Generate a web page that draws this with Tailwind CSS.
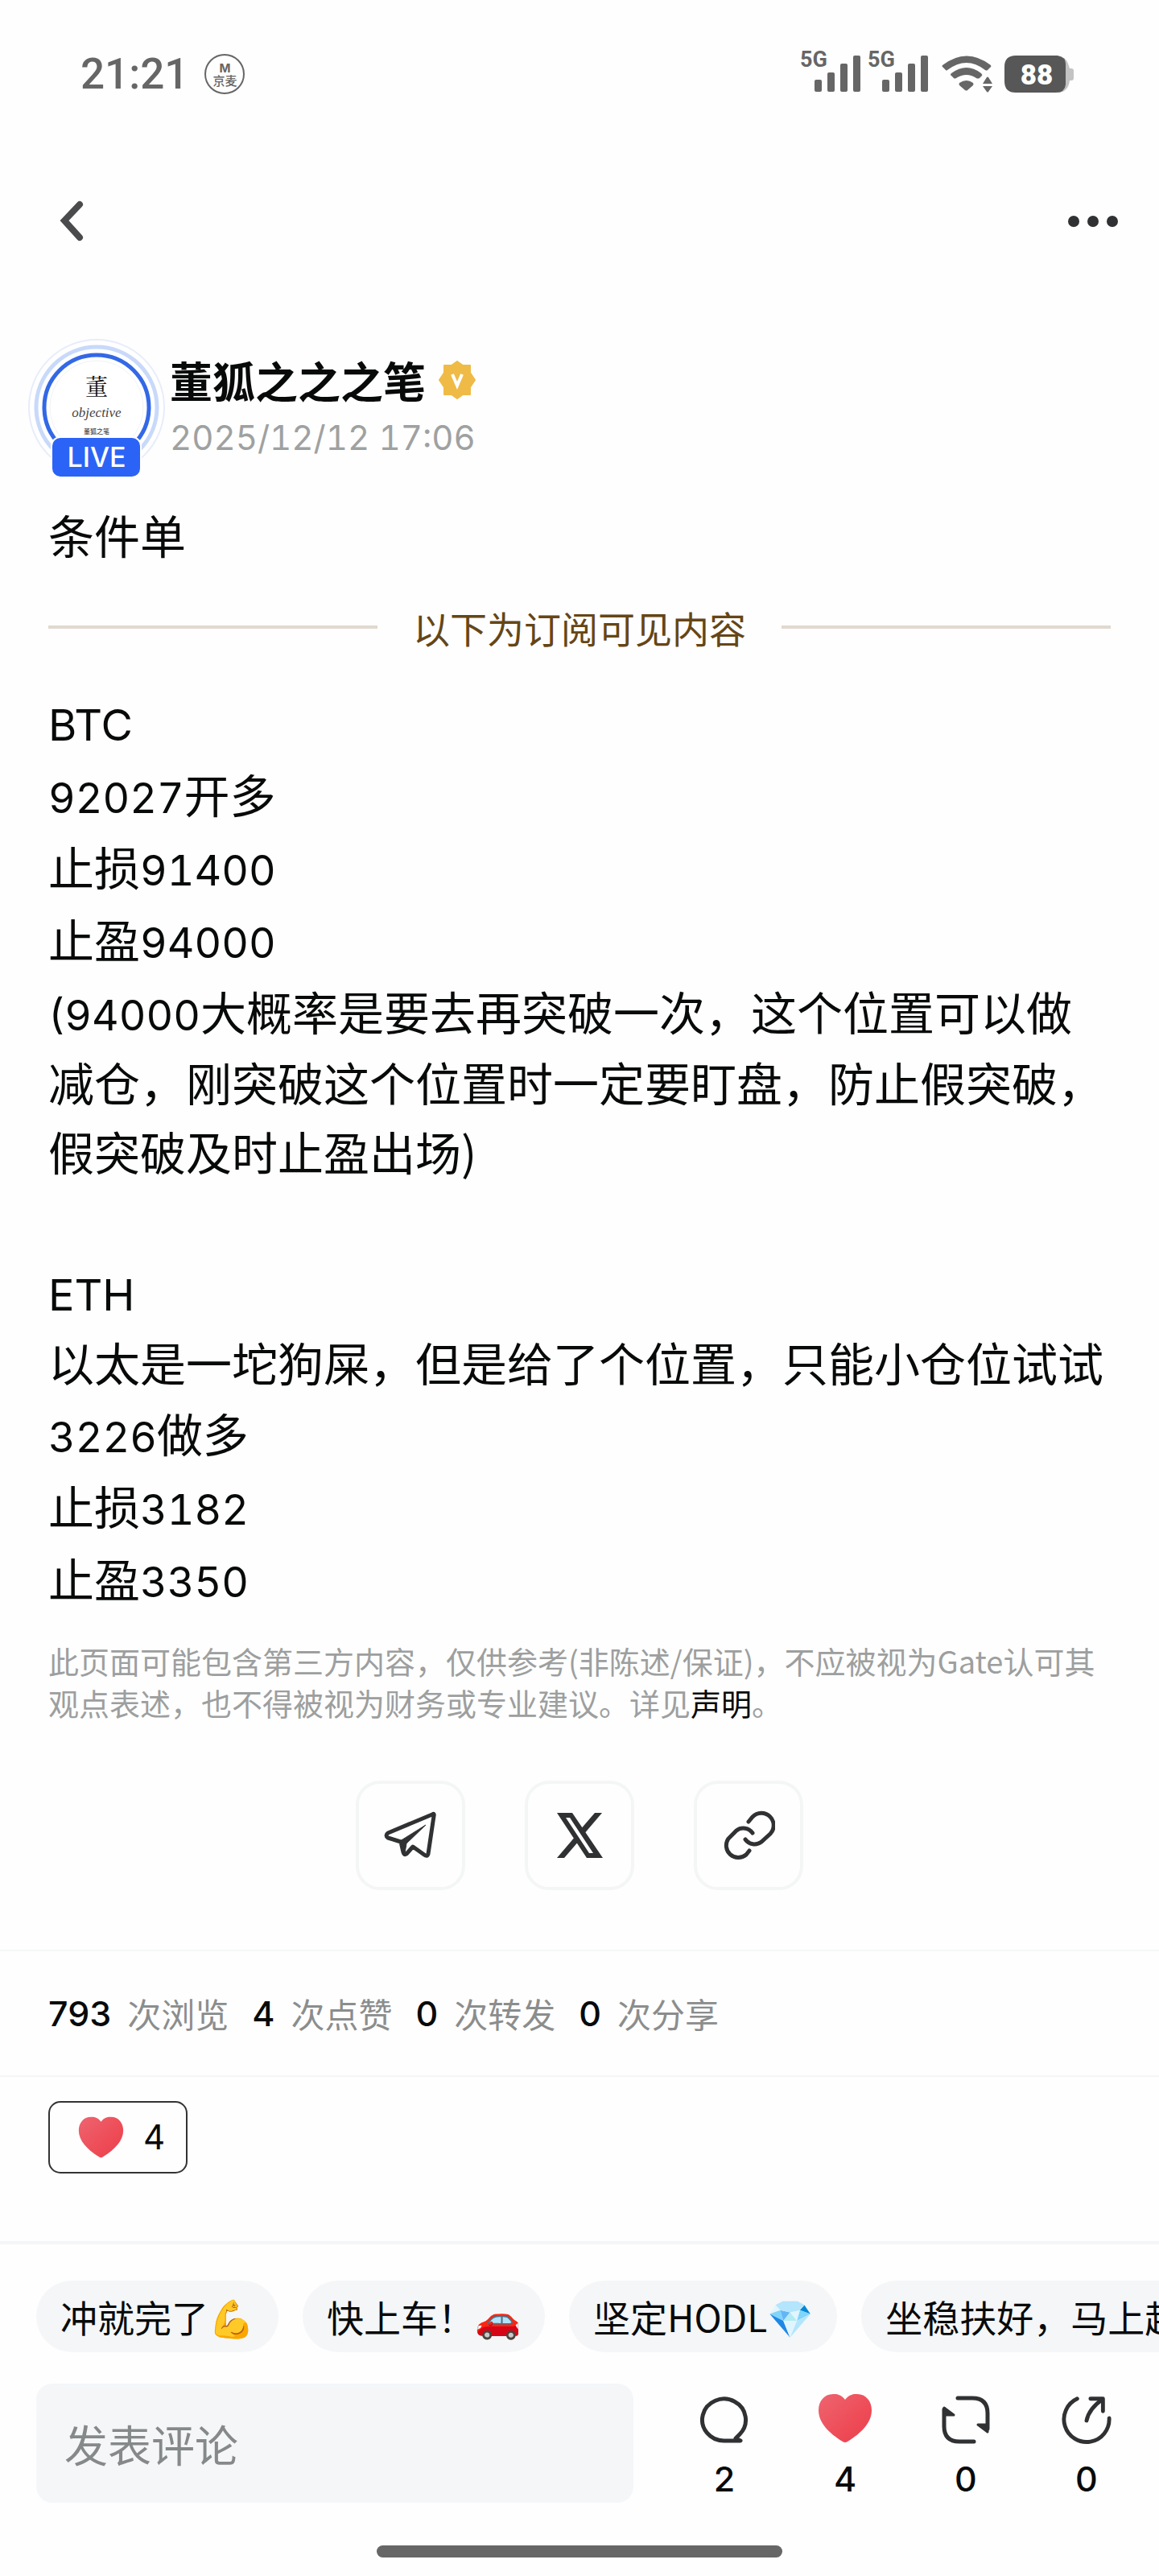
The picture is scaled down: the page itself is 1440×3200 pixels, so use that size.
<!DOCTYPE html>
<html lang="zh-CN">
  <head>
    <meta charset="UTF-8" />
    <meta name="viewport" content="width=device-width, initial-scale=1.0" />
    <title>条件单</title>
    <script src="https://cdn.jsdelivr.net/npm/@tailwindcss/browser@4"></script>
  </head>
  <body class="flex min-h-screen flex-col overflow-x-hidden bg-[#fefefe] font-['Noto_Sans_CJK_SC',sans-serif] text-[#080a0a]">

    <!-- Status bar -->
    <div class="flex h-[184px] items-center justify-between pr-[106px] pl-[100px] text-[#666]">
      <div class="flex items-center gap-[20px]">
        <span class="font-['Roboto',sans-serif] text-[53px] leading-[64px] font-medium">21:21</span>
        <div class="flex size-[50px] flex-col items-center justify-center rounded-full border-2 border-[#666]">
          <span class="font-['Inter',sans-serif] text-[15px] leading-[15px] font-bold">M</span>
          <span class="text-[15px] leading-[16px] font-medium">京麦</span>
        </div>
      </div>
      <div class="flex items-center">
        <svg class="mr-[8px] h-[68px] w-[76px]" viewBox="0 0 76 68" fill="#666">
          <text x="0" y="25" font-family="Roboto, sans-serif" font-weight="700" font-size="27">5G</text>
          <rect x="18" y="41" width="9" height="15" rx="2" /><rect x="34" y="32" width="9" height="24" rx="2" /><rect x="50" y="21" width="9" height="35" rx="2" /><rect x="66" y="11" width="9" height="45" rx="2" />
        </svg>
        <svg class="mr-[16px] h-[68px] w-[76px]" viewBox="0 0 76 68" fill="#666">
          <text x="0" y="25" font-family="Roboto, sans-serif" font-weight="700" font-size="27">5G</text>
          <rect x="18" y="41" width="9" height="15" rx="2" /><rect x="34" y="32" width="9" height="24" rx="2" /><rect x="50" y="21" width="9" height="35" rx="2" /><rect x="66" y="11" width="9" height="45" rx="2" />
        </svg>
        <svg class="mr-[15px] h-[46px] w-[63px]" viewBox="0 0 63 46" fill="#666">
          <path d="M1 12Q31-11 61 12Q62 14 60 15L57 18Q56 19 54 18Q31 0 7 18Q6 19 5 18L1 14Q0 13 1 12Z" />
          <path d="M12 22Q31 8 49 22Q51 24 50 25L47 28Q45 29 43 28Q31 20 18 28Q16 29 15 28L12 25Q10 24 12 22Z" />
          <path d="M22 34Q31 28 39 34Q40 35 39 37L32 43Q31 44 29 43L22 37Q21 35 22 34Z" />
          <path d="M51 35L56 27Q57 26 58 27L63 35ZM51 38H63L58 45Q57 46 56 45Z" />
        </svg>
        <svg class="h-[47px] w-[86px]" viewBox="0 0 86 47">
          <path d="M66 1Q76 1 79 10L81 16H83Q86 16 86 19V28Q86 31 83 31H81Q79 46 66 46Z" fill="#c3c3c3" />
          <path d="M14 0H66Q76 2 76 10V36Q75 46 64 46H14Q0 46 0 32V14Q0 0 14 0Z" fill="#575757" />
          <text x="40" y="36" text-anchor="middle" font-family="Roboto, sans-serif" font-weight="900" font-size="35" fill="#fff">88</text>
        </svg>
      </div>
    </div>

    <!-- Top nav -->
    <header class="flex h-[182px] items-center justify-between pr-[49px] pl-[68px]">
      <a href="#" aria-label="返回">
        <svg class="h-[52px] w-[36px]" viewBox="0 0 36 52" fill="none" stroke="#4a4b4d" stroke-width="8" stroke-linejoin="miter" stroke-linecap="round"><path d="M31 5L12 25L31 46" /></svg>
      </a>
      <button aria-label="更多">
        <svg class="h-[16px] w-[66px]" viewBox="0 0 66 16" fill="#303133"><circle cx="9" cy="8" r="7" /><circle cx="33" cy="8" r="7" /><circle cx="57" cy="8" r="7" /></svg>
      </button>
    </header>

    <main class="px-[60px]">
      <!-- Author -->
      <div class="-ml-[26px] flex pt-[54px]">
        <svg class="h-[174px] w-[172px] shrink-0" viewBox="0 0 172 174">
          <circle cx="86" cy="86" r="84" fill="#fff" stroke="#e8ecfb" stroke-width="2" />
          <circle cx="86" cy="86" r="75" fill="none" stroke="#c8d9fa" stroke-width="5" />
          <circle cx="86" cy="86" r="65" fill="#fff" stroke="#3368e6" stroke-width="5" />
          <circle cx="86" cy="86" r="58" fill="none" stroke="#f0f2f4" stroke-width="1" />
          <text x="86" y="71" text-anchor="middle" font-family="'Noto Serif CJK SC', 'Noto Sans CJK SC', serif" font-size="28" fill="#111">董</text>
          <text x="86" y="98" text-anchor="middle" font-family="'Liberation Serif', serif" font-style="italic" font-size="17" fill="#444">objective</text>
          <text x="86" y="119" text-anchor="middle" font-family="'Noto Sans CJK SC', sans-serif" font-weight="500" font-size="8" fill="#444">董狐之笔</text>
          <rect x="30" y="123" width="111" height="50" rx="11" fill="#2b63f6" stroke="#fff" stroke-width="2" />
          <text x="86" y="160" text-anchor="middle" font-family="'Inter', sans-serif" font-weight="500" font-size="34" fill="#fff">LIVE</text>
        </svg>
        <div class="pt-[16px] pl-[5px]">
          <div class="flex items-center gap-[16px]">
            <h2 class="text-[53px] leading-[72px] font-bold">董狐之之之笔</h2>
            <svg class="h-[48px] w-[46px]" viewBox="0 0 46 48">
              <path d="M23 1L30 6H39V15L45 24L39 33V42H30L23 47L16 42H7V33L1 24L7 15V6H16Z" fill="#efbb46" stroke="#efbb46" stroke-width="2" stroke-linejoin="round" />
              <path d="M17 17L23 31L29 17" fill="none" stroke="#fff" stroke-width="4" />
            </svg>
          </div>
          <time class="block font-['Inter',sans-serif] text-[42px] leading-[72px] text-[#9fa1a1] tabular-nums">2025/12/12 17:06</time>
        </div>
      </div>

      <h1 class="mt-[24px] text-[57px] leading-[90px]">条件单</h1>

      <!-- Subscriber divider -->
      <div class="mt-[41px] flex items-center gap-[44px]">
        <div class="h-[4px] flex-1 bg-[#e1d8cf]"></div>
        <span class="text-[46px] leading-[60px] text-[#654616]">以下为订阅可见内容</span>
        <div class="h-[4px] flex-1 bg-[#e1d8cf]"></div>
      </div>

      <!-- Post -->
      <article class="mt-[41px] text-[57px] leading-[90px] whitespace-nowrap tabular-nums">
        <p><span class="font-['Inter',sans-serif] text-[54px] leading-none">BTC</span></p>
        <p><span class="font-['Inter',sans-serif] text-[52px] leading-none">92027</span>开多</p>
        <p>止损<span class="font-['Inter',sans-serif] text-[52px] leading-none">91400</span></p>
        <p>止盈<span class="font-['Inter',sans-serif] text-[52px] leading-none">94000</span></p>
        <p><span class="font-['Inter',sans-serif] text-[52px] leading-none">(94000</span>大概率是要去再突破一次，这个位置可以做</p>
        <p class="leading-[86px]">减仓，刚突破这个位置时一定要盯盘，防止假突破，</p>
        <p class="leading-[86px]">假突破及时止盈出场)</p>
        <p class="leading-[86px]"><br /></p>
        <p><span class="font-['Inter',sans-serif] text-[54px] leading-none">ETH</span></p>
        <p class="leading-[86px]">以太是一坨狗屎，但是给了个位置，只能小仓位试试</p>
        <p><span class="font-['Inter',sans-serif] text-[52px] leading-none">3226</span>做多</p>
        <p>止损<span class="font-['Inter',sans-serif] text-[52px] leading-none">3182</span></p>
        <p>止盈<span class="font-['Inter',sans-serif] text-[52px] leading-none">3350</span></p>
      </article>

      <p class="mt-[33px] text-[38px] leading-[52px] whitespace-nowrap text-[#9d9f9f]">
        此页面可能包含第三方内容，仅供参考(非陈述/保证)，不应被视为Gate认可其<br />
        观点表述，也不得被视为财务或专业建议。详见<a href="#" class="text-[#080a0a]">声明</a>。
      </p>

      <!-- Share -->
      <div class="mt-[71px] flex justify-center gap-[74px]">
        <button aria-label="Telegram" class="flex size-[136px] items-center justify-center rounded-[30px] border-4 border-[#f4f6f6]">
          <svg class="size-[66px]" viewBox="0 0 66 66" fill="none" stroke="#2f3133" stroke-width="5" stroke-linejoin="round">
            <path d="M60 7Q63 5 62 9L55 56Q54 60 50 57L36 47L28 56Q25 58 24 54L21 41L5 36Q1 33 5 30Z" />
            <path d="M20 40L52 20L28 43L26 55Z" fill="#2f3133" stroke-width="1" />
          </svg>
        </button>
        <button aria-label="X" class="flex size-[136px] items-center justify-center rounded-[30px] border-4 border-[#f4f6f6]">
          <svg class="size-[58px]" viewBox="0 0 58 58" fill="#2f3133">
            <path fill-rule="evenodd" d="M1 1H20L58 57H38ZM12 7L41 51H46L17 7Z" />
            <path d="M48 1H57L34 28L29 23ZM1 57H10L29 35L24 30Z" />
          </svg>
        </button>
        <button aria-label="复制链接" class="flex size-[136px] items-center justify-center rounded-[30px] border-4 border-[#f4f6f6]">
          <svg class="size-[66px]" viewBox="0 0 66 66" fill="none" stroke="#2f3133" stroke-width="5" stroke-linecap="round">
            <path d="M33 16L38 10A15 15 0 0 1 60 31L49 41A14 14 0 0 1 29 38" />
            <path d="M38 30A14 14 0 0 0 18 27L8 37A15 15 0 0 0 30 57L34 52" />
          </svg>
        </button>
      </div>
    </main>

    <!-- Stats -->
    <div class="mt-[74px] flex h-[158px] items-center gap-[29px] border-y-2 border-[#f5f6f6] px-[60px] text-[42px] leading-[60px] text-[#8b8d8d]">
      <div class="flex items-center gap-[20px]"><span class="font-['Inter',sans-serif] text-[43px] font-medium text-[#080a0a]">793</span>次浏览</div>
      <div class="flex items-center gap-[20px]"><span class="font-['Inter',sans-serif] text-[43px] font-medium text-[#080a0a]">4</span>次点赞</div>
      <div class="flex items-center gap-[20px]"><span class="font-['Inter',sans-serif] text-[43px] font-medium text-[#080a0a]">0</span>次转发</div>
      <div class="flex items-center gap-[20px]"><span class="font-['Inter',sans-serif] text-[43px] font-medium text-[#080a0a]">0</span>次分享</div>
    </div>

    <!-- Reactions -->
    <div class="px-[60px] pt-[30px]">
      <button class="flex h-[90px] items-center gap-[24px] rounded-[15px] border-2 border-[#333] pr-[26px] pl-[35px]">
        <svg class="h-[54px] w-[57px]" viewBox="0 0 68 62">
          <defs><linearGradient id="heart" x1="0" y1="0" x2="1" y2="1"><stop offset="0" stop-color="#ed6570" /><stop offset="0.6" stop-color="#ee4c57" /><stop offset="1" stop-color="#e9404f" /></linearGradient></defs>
          <path d="M34 8C29 1 23 1 19 1C8 1 1 10 1 21C1 36 13 49 31 60Q34 62 37 60C55 49 67 36 67 21C67 10 60 1 49 1C45 1 39 1 34 8Z" fill="url(#heart)" />
        </svg>
        <span class="font-['Inter',sans-serif] text-[42px] leading-[60px]">4</span>
      </button>
    </div>

    <!-- Comment bar -->
    <footer class="mt-auto border-t-4 border-[#f4f5f6]">
      <div class="flex gap-[30px] overflow-hidden pt-[45px] pl-[45px] text-[46px] leading-[89px] whitespace-nowrap">
        <button class="shrink-0 rounded-full bg-[#f4f6f8] px-[30px]">冲就完了💪</button>
        <button class="shrink-0 rounded-full bg-[#f4f6f8] px-[30px]">快上车！🚗</button>
        <button class="shrink-0 rounded-full bg-[#f4f6f8] px-[30px]">坚定HODL💎</button>
        <button class="shrink-0 rounded-full bg-[#f4f6f8] px-[30px]">坐稳扶好，马上起飞🚀</button>
      </div>
      <div class="mt-[39px] flex items-end gap-[38px] pr-[15px] pl-[45px]">
        <input type="text" aria-label="发表评论" placeholder="发表评论" class="h-[148px] min-w-0 flex-1 rounded-[20px] bg-[#f4f6f8] px-[35px] text-[54px] placeholder:text-[#868989] placeholder:opacity-100" />
        <div class="grid grid-cols-4 pb-[3px] font-['Inter',sans-serif] text-[43px] leading-[54px] font-medium">
          <button class="flex w-[150px] flex-col items-center gap-[15px]">
            <svg class="size-[64px]" viewBox="0 0 64 64" fill="none" stroke="#303133" stroke-width="5" stroke-linejoin="round" stroke-linecap="round"><path d="M32 59A27 26 0 1 1 51 51L46 56L52 59Z" /></svg>
            2
          </button>
          <button class="flex w-[150px] flex-col items-center gap-[15px]">
            <svg class="h-[64px] w-[68px]" viewBox="0 0 68 64"><path d="M34 8C29 1 23 1 19 1C8 1 1 10 1 21C1 36 13 49 31 60Q34 62 37 60C55 49 67 36 67 21C67 10 60 1 49 1C45 1 39 1 34 8Z" fill="url(#heart)" /></svg>
            4
          </button>
          <button class="flex w-[150px] flex-col items-center gap-[15px]">
            <svg class="size-[64px]" viewBox="0 0 64 64" fill="none" stroke="#303133" stroke-width="5" stroke-linejoin="round" stroke-linecap="round">
              <path d="M22 6H40Q59 6 59 25V44" /><path d="M42 60H24Q5 60 5 41V20" />
              <path d="M59 48L47 39H59ZM5 18L17 27H5Z" fill="#303133" stroke-width="3" />
            </svg>
            0
          </button>
          <button class="flex w-[150px] flex-col items-center gap-[15px]">
            <svg class="size-[64px]" viewBox="0 0 66 66" fill="none" stroke="#303133" stroke-width="5" stroke-linejoin="round" stroke-linecap="round">
              <path d="M21 7A29 29 0 1 0 62 32" /><path d="M33 35Q36 20 53 8" /><path d="M38 7H54V23" />
            </svg>
            0
          </button>
        </div>
      </div>
      <div class="mx-auto mt-[53px] mb-[23px] h-[15px] w-[35%] rounded-full bg-[#666]"></div>
    </footer>

  </body>
</html>
